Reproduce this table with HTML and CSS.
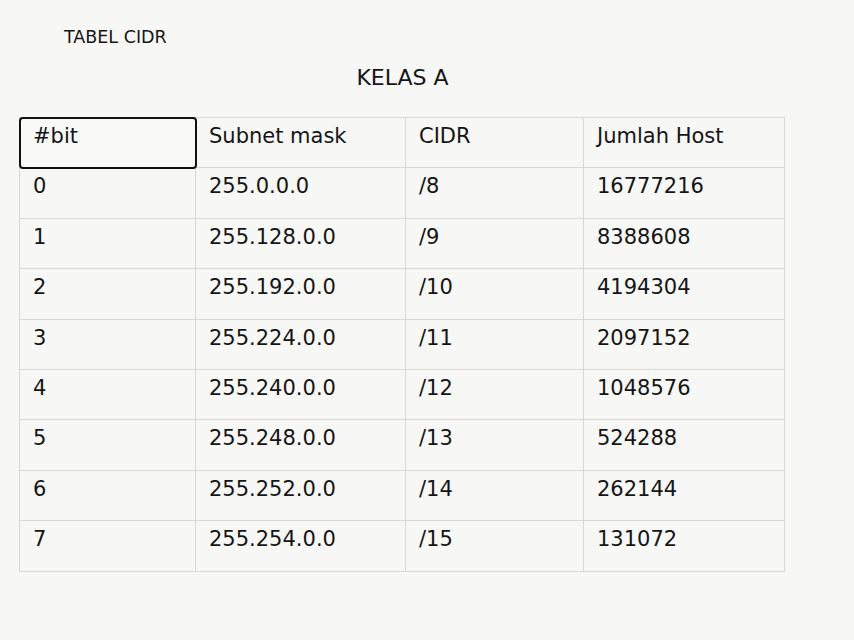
FILE: index.html
```html
<!DOCTYPE html>
<html>
<head>
<meta charset="utf-8">
<link rel="stylesheet" href="styles.css">
</head>
<body>
<div class="page">
  <div class="doc-title">TABEL CIDR</div>
  <div class="class-title">KELAS A</div>
  <table class="cidr">
    <colgroup>
      <col class="c1"><col class="c2"><col class="c3"><col class="c4">
    </colgroup>
    <tr><td class="sel">#bit</td><td>Subnet mask</td><td>CIDR</td><td>Jumlah Host</td></tr>
    <tr><td>0</td><td>255.0.0.0</td><td>/8</td><td>16777216</td></tr>
    <tr><td>1</td><td>255.128.0.0</td><td>/9</td><td>8388608</td></tr>
    <tr><td>2</td><td>255.192.0.0</td><td>/10</td><td>4194304</td></tr>
    <tr><td>3</td><td>255.224.0.0</td><td>/11</td><td>2097152</td></tr>
    <tr><td>4</td><td>255.240.0.0</td><td>/12</td><td>1048576</td></tr>
    <tr><td>5</td><td>255.248.0.0</td><td>/13</td><td>524288</td></tr>
    <tr><td>6</td><td>255.252.0.0</td><td>/14</td><td>262144</td></tr>
    <tr><td>7</td><td>255.254.0.0</td><td>/15</td><td>131072</td></tr>
  </table>
</div>
</body>
</html>
```
FILE: styles.css
```css
html, body {
  margin: 0;
  padding: 0;
  background: #f7f7f5;
}
body {
  font-family: "DejaVu Sans", Verdana, sans-serif;
  color: #151515;
}
.page {
  width: 854px;
  height: 640px;
  padding: 26px 0 0 19px;
  box-sizing: border-box;
}
.doc-title {
  margin-left: 45px;
  font-size: 17.5px;
  line-height: 22px;
}
.class-title {
  width: 765px;
  margin-top: 17px;
  text-align: center;
  font-size: 22px;
  line-height: 26px;
  padding-left: 2px;
  box-sizing: border-box;
}
.cidr {
  margin-top: 26px;
  border-collapse: collapse;
  table-layout: fixed;
  width: 765px;
  font-size: 21px;
}
.c1 { width: 176px; }
.c2 { width: 210px; }
.c3 { width: 178px; }
.c4 { width: 201px; }
.cidr td {
  border: 1px solid #d9d9cf;
  height: 50.4px;
  box-sizing: border-box;
  padding: 5px 13px 0 13px;
  vertical-align: top;
  line-height: 26px;
  white-space: nowrap;
}
.cidr td.sel {
  outline: 2px solid #111;
  outline-offset: -1px;
  border-radius: 3px;
  background: #f9f9f8;
}
```
